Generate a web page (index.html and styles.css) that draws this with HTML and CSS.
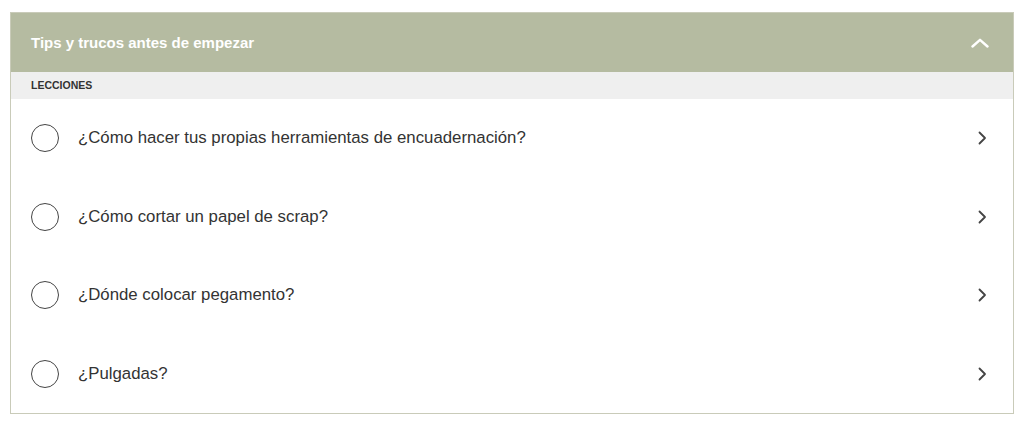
FILE: index.html
```html
<!DOCTYPE html>
<html lang="es">
<head>
  <meta charset="UTF-8">
  <meta name="viewport" content="width=device-width, initial-scale=1.0">
  <title>Tips y trucos antes de empezar</title>
  <link rel="stylesheet" href="styles.css">
</head>
<body>

  <section class="module">
    <header class="module-header">
      <h2>Tips y trucos antes de empezar</h2>
      <svg class="toggle" width="18" height="10" viewBox="0 0 18 10">
        <polyline points="1.5,8.5 9,1.8 16.5,8.5" fill="none" stroke="#fff" stroke-width="2.4" stroke-linecap="round" stroke-linejoin="round"/>
      </svg>
    </header>

    <div class="section-label">LECCIONES</div>

    <ul class="lessons">
      <li class="lesson">
        <span class="check"></span>
        <span class="lesson-title">¿Cómo hacer tus propias herramientas de encuadernación?</span>
        <svg class="arrow" width="9" height="14" viewBox="0 0 9 14"><polyline points="1.5,1.5 7,7 1.5,12.5" fill="none" stroke="#444" stroke-width="1.8" stroke-linecap="round" stroke-linejoin="round"/></svg>
      </li>
      <li class="lesson">
        <span class="check"></span>
        <span class="lesson-title">¿Cómo cortar un papel de scrap?</span>
        <svg class="arrow" width="9" height="14" viewBox="0 0 9 14"><polyline points="1.5,1.5 7,7 1.5,12.5" fill="none" stroke="#444" stroke-width="1.8" stroke-linecap="round" stroke-linejoin="round"/></svg>
      </li>
      <li class="lesson">
        <span class="check"></span>
        <span class="lesson-title">¿Dónde colocar pegamento?</span>
        <svg class="arrow" width="9" height="14" viewBox="0 0 9 14"><polyline points="1.5,1.5 7,7 1.5,12.5" fill="none" stroke="#444" stroke-width="1.8" stroke-linecap="round" stroke-linejoin="round"/></svg>
      </li>
      <li class="lesson">
        <span class="check"></span>
        <span class="lesson-title">¿Pulgadas?</span>
        <svg class="arrow" width="9" height="14" viewBox="0 0 9 14"><polyline points="1.5,1.5 7,7 1.5,12.5" fill="none" stroke="#444" stroke-width="1.8" stroke-linecap="round" stroke-linejoin="round"/></svg>
      </li>
    </ul>
  </section>

</body>
</html>
```

FILE: styles.css
```css
body {
  font-family: "Liberation Sans", Arial, Helvetica, sans-serif;
  margin: 12px 10px;
  background-color: #fff;
  color: #333;
}

.module {
  border: 1px solid #c9cbb9;
  background-color: #fff;
}

.module-header {
  display: flex;
  align-items: center;
  justify-content: space-between;
  height: 59px;
  padding: 0 24px 0 20px;
  background-color: #b5bba1;
}

.module-header h2 {
  margin: 0;
  font-size: 15px;
  font-weight: bold;
  color: #fff;
}

.toggle {
  display: block;
}

.section-label {
  height: 27px;
  line-height: 27px;
  padding-left: 20px;
  background-color: #efefef;
  font-size: 10.5px;
  font-weight: bold;
  color: #333;
}

.lessons {
  list-style: none;
  margin: 0;
  padding: 0;
}

.lesson {
  display: flex;
  align-items: center;
  height: 78.5px;
  padding: 0 26px 0 20px;
}

.check {
  flex: none;
  width: 26px;
  height: 26px;
  border: 1.5px solid #444;
  border-radius: 50%;
  margin-right: 19px;
}

.lesson-title {
  flex: 1;
  font-size: 16.8px;
  color: #333;
}

.arrow {
  display: block;
  flex: none;
}
```
